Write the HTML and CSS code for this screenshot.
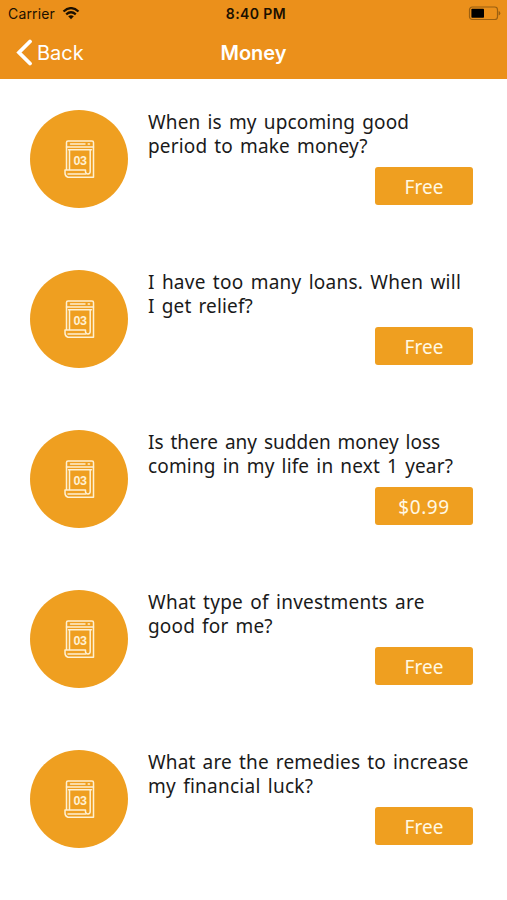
FILE: index.html
```html
<!DOCTYPE html>
<html lang="en">
<head>
    <meta charset="UTF-8">
    <meta name="viewport" content="width=device-width, initial-scale=1.0">
    <title>Money</title>
    <link rel="stylesheet" href="styles.css">
</head>

<body>
    <!-- calendar icon, shared by all the rows -->
    <svg class="symbols" width="0" height="0">
        <symbol id="calendar" viewBox="0 0 32 40">
            <g fill="none" stroke="#fff1d2" stroke-width="1.5" stroke-linejoin="round" stroke-linecap="round">
                <path d="M3.500 30.500V3.500Q3.500 2 5 2H29Q30.500 2 30.500 3.500V38.200H5Q2 37.500 2 34V31H22.500V33Q23 35.200 25 35Q27.200 34.800 27.200 32.500V11" />
                <path d="M3.500 8H30.500M7.500 5H22M25.200 5H26.500M5.500 10.700H28.500M6.500 11V30.500M5 35H22.500" />
            </g>
        </symbol>
    </svg>

    <div class="header">
        <div class="statusBar">
            <div class="carrier">
                <span>Carrier</span>
                <svg width="18" height="13" viewBox="0 0 18 13">
                    <path d="M1.500 4.500Q9-2.200 16.500 4.500M4.200 7.300Q9 3.200 13.800 7.300" fill="none" stroke="#1c1000" stroke-width="2.300" />
                    <path d="M6.200 9.300Q9 7.100 11.800 9.300L9 12.200Z" fill="#1c1000" />
                </svg>
            </div>
            <div class="time">8:40 PM</div>
            <svg class="battery" width="33" height="15" viewBox="0 0 33 15">
                <rect x="1.500" y="1" width="28" height="12.500" rx="2.800" fill="none" stroke="#9a5f10" stroke-width="1.200" />
                <rect x="3.400" y="2.800" width="12.600" height="9" rx="0.800" fill="#000" />
                <path d="M30.600 5V9.500Q32.300 9 32.300 7.250Q32.300 5.500 30.600 5Z" fill="#9a5f10" />
            </svg>
        </div>
        <div class="navBar">
            <div class="back">
                <svg width="17" height="27" viewBox="0 0 17 27">
                    <path d="M14 2.500L3 13.500L14 24.500" fill="none" stroke="#fff" stroke-width="3.800" stroke-linecap="round" />
                </svg>
                <span class="backText">Back</span>
            </div>
            <div class="title">Money</div>
        </div>
    </div>

    <div class="questions">
        <div class="question">
            <div class="circle">
                <svg width="32" height="40"><use href="#calendar" /><text x="17" y="26" class="calendarDay">03</text></svg>
            </div>
            <div class="info">
                <p class="text">When is my upcoming good<br>period to make money?</p>
                <div class="price">Free</div>
            </div>
        </div>
        <div class="question">
            <div class="circle">
                <svg width="32" height="40"><use href="#calendar" /><text x="17" y="26" class="calendarDay">03</text></svg>
            </div>
            <div class="info">
                <p class="text"><span class="wide">I have too many loans. When will</span><br>I get relief?</p>
                <div class="price">Free</div>
            </div>
        </div>
        <div class="question">
            <div class="circle">
                <svg width="32" height="40"><use href="#calendar" /><text x="17" y="26" class="calendarDay">03</text></svg>
            </div>
            <div class="info">
                <p class="text"><span class="tight">Is there any sudden money loss</span><br>coming in my life in next 1 year?</p>
                <div class="price amount">$0.99</div>
            </div>
        </div>
        <div class="question">
            <div class="circle">
                <svg width="32" height="40"><use href="#calendar" /><text x="17" y="26" class="calendarDay">03</text></svg>
            </div>
            <div class="info">
                <p class="text"><span class="wide">What type of investments are</span><br>good for me?</p>
                <div class="price">Free</div>
            </div>
        </div>
        <div class="question">
            <div class="circle">
                <svg width="32" height="40"><use href="#calendar" /><text x="17" y="26" class="calendarDay">03</text></svg>
            </div>
            <div class="info">
                <p class="text">What are the remedies to increase<br><span class="wide">my financial luck?</span></p>
                <div class="price">Free</div>
            </div>
        </div>
    </div>
</body>

</html>
```

FILE: styles.css
```css
* {
    margin: 0;
    padding: 0;
    box-sizing: border-box;
}
body {
    width: 507px;
    height: 900px;
    background-color: #fff;
    font-family: "Noto Sans", sans-serif;
    overflow: hidden;
}
.symbols {
    display: block;
}
.header {
    height: 79px;
    background-color: #eb901b;
    font-family: Inter, "Liberation Sans", sans-serif;
}
.statusBar {
    height: 27px;
    padding: 0 6px 0 8px;
    display: grid;
    grid-template-columns: 1fr auto 1fr;
    align-items: center;
    font-size: 14px;
    color: #1c1000;
}
.carrier {
    display: flex;
    align-items: center;
    gap: 7px;
    letter-spacing: 0.15px;
}
.time {
    padding-left: 3px;
    font-weight: 600;
    letter-spacing: 0.4px;
}
.battery {
    justify-self: end;
}
.navBar {
    height: 51px;
    padding: 0 16px;
    display: grid;
    grid-template-columns: 1fr auto 1fr;
    align-items: center;
    color: #fff;
    font-size: 20px;
}
.back {
    display: flex;
    align-items: center;
    gap: 4px;
}
.title {
    font-weight: 600;
}
.questions {
    padding: 31px 34px 0 30px;
}
.question {
    height: 160px;
    display: flex;
    gap: 20px;
}
.circle {
    width: 98px;
    height: 98px;
    flex-shrink: 0;
    border-radius: 50%;
    background-color: #ef9f20;
    display: flex;
    align-items: center;
    justify-content: center;
}
.calendarDay {
    font-family: "Liberation Sans", sans-serif;
    font-size: 12.5px;
    font-weight: bold;
    letter-spacing: -0.5px;
    text-anchor: middle;
    fill: #fff1d2;
}
.info {
    flex: 1;
    display: flex;
    flex-direction: column;
}
.text {
    height: 57px;
    font-size: 19px;
    line-height: 24px;
    letter-spacing: 0.15px;
    word-spacing: 2px;
    white-space: nowrap;
    color: #1a1a1a;
}
.wide {
    letter-spacing: 0.25px;
}
.tight {
    letter-spacing: 0;
}
.price {
    width: 98px;
    height: 38px;
    align-self: flex-end;
    border-radius: 3px;
    background-color: #ef9f20;
    color: #fff8e4;
    font-size: 19px;
    line-height: 40px;
    text-align: center;
}
.amount {
    letter-spacing: 0.6px;
}
```
